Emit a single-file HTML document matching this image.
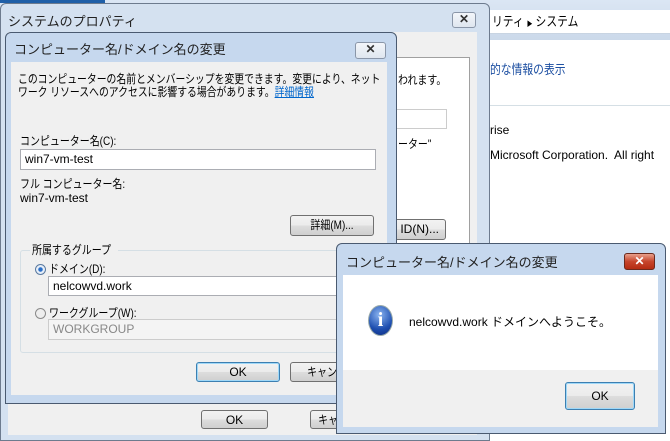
<!DOCTYPE html>
<html><head><meta charset="utf-8"><style>
*{margin:0;padding:0;box-sizing:border-box}
body{width:670px;height:441px;overflow:hidden;position:relative;background:#fff;font-family:"Liberation Sans","Noto Sans CJK JP",sans-serif;font-size:12px;color:#000}
.a{position:absolute}
.t{position:absolute;white-space:nowrap;font-size:12px;line-height:14px}
.btn{position:absolute;border:1px solid #707070;border-radius:3px;background:linear-gradient(#f2f2f2,#ebebeb 50%,#dddddd 51%,#cfcfcf);text-align:center;font-size:12px;line-height:19px}
.x{position:absolute;border:1px solid #8a96a8;border-radius:3px;background:linear-gradient(#f3f6fa,#dfe6ef);text-align:center;font-size:12px;line-height:13px;color:#333;font-weight:bold}
.inp{position:absolute;background:#fff;border:1px solid #abadb3;font-size:12px;line-height:18px;padding-left:4px}
.s{font-size:12px;transform:scaleX(.83);transform-origin:left}
.c{display:inline-block;transform:scaleX(.83)}
</style></head><body>
<div class="a" style="left:0;top:0;width:670px;height:40px;background:linear-gradient(#dbe6f4,#cbd9ea)"></div>
<div class="a" style="left:0;top:0;width:105px;height:3px;background:#1f5fa8"></div>
<div class="a" style="left:490px;top:10px;width:180px;height:24px;background:#fff;border-bottom:1px solid #c8d4e2"></div>
<div class="t s" style="left:492px;top:15px;font-size:13px">リティ <span style="font-size:7px">▶</span> システム</div>
<div class="a" style="left:490px;top:40px;width:180px;height:401px;background:#fff"></div>
<div class="t s" style="left:490px;top:63px;color:#1e50a2;font-size:13px">的な情報の表示</div>
<div class="a" style="left:490px;top:105px;width:180px;height:1px;background:#d5dfe5"></div>
<div class="t" style="left:490px;top:123px">rise</div>
<div class="t" style="left:490px;top:148px">Microsoft Corporation.&nbsp; All right</div>

<div class="a" style="left:0;top:3px;width:490px;height:438px;background:#d4e1f0;border:1px solid #6d7b8e;border-radius:6px 6px 0 0"></div>
<div class="t" style="left:8px;top:15px;font-size:13px;color:#222">システムのプロパティ</div>
<div class="x" style="left:452px;top:12px;width:24px;height:16px">✕</div>
<div class="a" style="left:8px;top:32px;width:469px;height:375px;background:#f0f0f0"></div>
<div class="a" style="left:308px;top:57px;width:162px;height:350px;background:#fff;border:1px solid #a0a0a0"></div>
<div class="t s" style="left:398px;top:73px">われます。</div>
<div class="a" style="left:395px;top:109px;width:52px;height:20px;border:1px solid #ccc;background:#fff"></div>
<div class="t s" style="left:398px;top:137px">ーター"</div>
<div class="btn" style="left:380px;top:219px;width:66px;height:21px;text-align:right;padding-right:6px">ID(N)...</div>
<div class="a" style="left:8px;top:403px;width:469px;height:32px;background:#f0f0f0"></div>
<div class="btn" style="left:201px;top:410px;width:67px;height:19px">OK</div>
<div class="btn" style="left:310px;top:410px;width:67px;height:19px"><span class="c">キャンセル</span></div>

<div class="a" style="left:5px;top:32px;width:392px;height:372px;background:#c6d8ee;border:1px solid #4a5a70;border-radius:6px 6px 0 0"></div>
<div class="t" style="left:14px;top:43px;font-size:13px;color:#222">コンピューター名/ドメイン名の変更</div>
<div class="x" style="left:355px;top:42px;width:31px;height:17px">✕</div>
<div class="a" style="left:11px;top:62px;width:376px;height:333px;background:#f0f0f0"></div>
<div class="t s" style="left:18px;top:72px;transform:scaleX(.82)">このコンピューターの名前とメンバーシップを変更できます。変更により、ネット</div>
<div class="t s" style="left:18px;top:85px;transform:scaleX(.82)">ワーク リソースへのアクセスに影響する場合があります。<span style="color:#0066cc;text-decoration:underline">詳細情報</span></div>
<div class="t s" style="left:20px;top:134px">コンピューター名(C):</div>
<div class="inp" style="left:20px;top:149px;width:356px;height:21px">win7-vm-test</div>
<div class="t s" style="left:20px;top:177px">フル コンピューター名:</div>
<div class="t" style="left:20px;top:191px">win7-vm-test</div>
<div class="btn" style="left:290px;top:215px;width:84px;height:21px"><span class="c">詳細(M)...</span></div>
<div class="a" style="left:20px;top:250px;width:355px;height:103px;border:1px solid #d5dfe5;border-radius:3px"></div>
<div class="a" style="left:30px;top:243px;width:88px;height:14px;background:#f0f0f0"></div>
<div class="t s" style="left:32px;top:243px">所属するグループ</div>
<div class="a" style="left:35px;top:264px;width:11px;height:11px;border-radius:50%;border:1px solid #5a7aa0;background:radial-gradient(#2a6fc9 30%,#e6eef8 40%)"></div>
<div class="t s" style="left:49px;top:262px">ドメイン(D):</div>
<div class="inp" style="left:48px;top:276px;width:300px;height:20px">nelcowvd.work</div>
<div class="a" style="left:35px;top:308px;width:11px;height:11px;border-radius:50%;border:1px solid #8a8a8a;background:#eee"></div>
<div class="t s" style="left:49px;top:306px">ワークグループ(W):</div>
<div class="inp" style="left:48px;top:319px;width:300px;height:21px;color:#888;border-color:#ccc;background:#f4f4f4">WORKGROUP</div>
<div class="btn" style="left:196px;top:362px;width:84px;height:20px;border-color:#3c7fb1;box-shadow:inset 0 0 0 1px #9fd8f8">OK</div>
<div class="btn" style="left:290px;top:362px;width:84px;height:20px"><span class="c">キャンセル</span></div>

<div class="a" style="left:336px;top:243px;width:330px;height:191px;background:#c6d8ee;border:1px solid #4a5a70;border-radius:6px 6px 0 0"></div>
<div class="t" style="left:346px;top:256px;font-size:13px;color:#222">コンピューター名/ドメイン名の変更</div>
<div class="a" style="left:624px;top:253px;width:31px;height:17px;border:1px solid #6b2a1e;border-radius:3px;background:linear-gradient(#e9a08c,#c6452c 50%,#b52c12);color:#fff;font-weight:bold;text-align:center;line-height:15px">✕</div>
<div class="a" style="left:343px;top:275px;width:315px;height:95px;background:#fff"></div>
<div class="a" style="left:343px;top:370px;width:315px;height:57px;background:#f0f0f0"></div>
<div class="a" style="left:368px;top:305px;width:25px;height:31px;border-radius:50%;border:1px solid #9aa;background:radial-gradient(circle at 45% 30%,#8ab4f0,#1e4fb0 60%,#0d2a80);color:#fff;font-family:'Liberation Serif',serif;font-weight:bold;font-size:20px;text-align:center;line-height:29px">i</div>
<div class="t" style="left:409px;top:315px;font-size:12px">nelcowvd.work ドメインへようこそ。</div>
<div class="btn" style="left:565px;top:382px;width:70px;height:28px;line-height:26px;border-color:#3c7fb1;box-shadow:inset 0 0 0 1px #9fd8f8">OK</div>
</body></html>
